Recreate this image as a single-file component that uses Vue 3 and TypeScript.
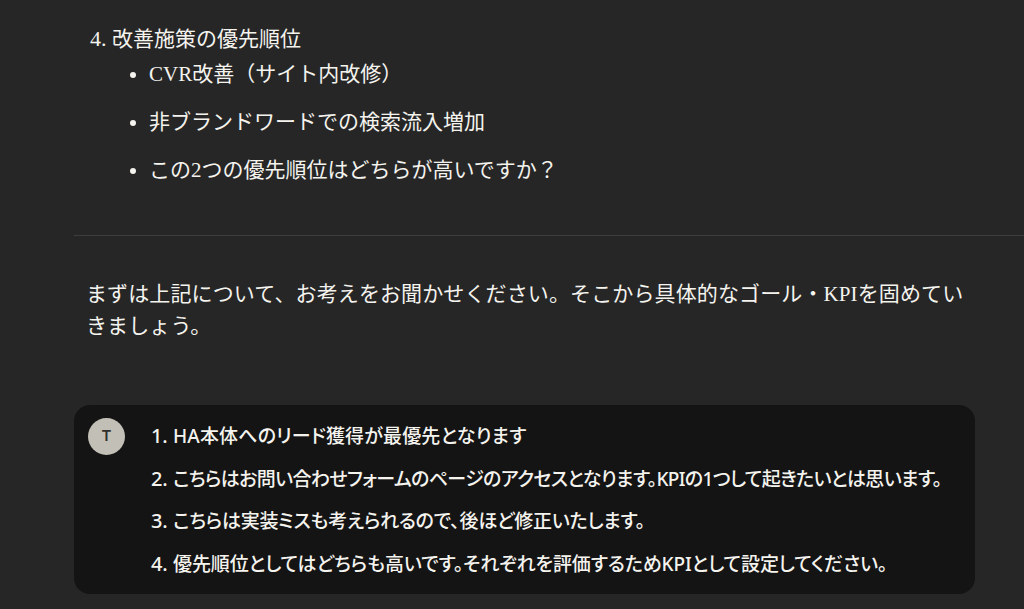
<script setup lang="ts">
interface Reply { text: string; tracking: number }

const bullets: string[] = [
  'CVR改善（サイト内改修）',
  '非ブランドワードでの検索流入増加',
  'この2つの優先順位はどちらが高いですか？',
]
const replies: Reply[] = [
  { text: 'HA本体へのリード獲得が最優先となります', tracking: 0.15 },
  { text: 'こちらはお問い合わせフォームのページのアクセスとなります。KPIの1つして起きたいとは思います。', tracking: -0.63 },
  { text: 'こちらは実装ミスも考えられるので、後ほど修正いたします。', tracking: -0.25 },
  { text: '優先順位としてはどちらも高いです。それぞれを評価するためKPIとして設定してください。', tracking: -0.1 },
]
</script>

<template>
  <main class="page">
    <section class="answer">
      <ol class="topics" start="4">
        <li>
          改善施策の優先順位
          <ul class="bullets">
            <li v-for="b in bullets" :key="b">{{ b }}</li>
          </ul>
        </li>
      </ol>
      <hr class="rule" />
      <p class="closing">まずは上記について、お考えをお聞かせください。そこから具体的なゴール・KPIを固めていきましょう。</p>
    </section>
    <section class="bubble">
      <div class="avatar">T</div>
      <ol class="replies">
        <li v-for="r in replies" :key="r.text" :style="{ letterSpacing: r.tracking + 'px' }">{{ r.text }}</li>
      </ol>
    </section>
  </main>
</template>

<style>
html, body { margin: 0; background: #262626; }
</style>

<style scoped>
.page {
  width: 1024px;
  height: 609px;
  overflow: hidden;
  box-sizing: border-box;
  padding: 24px 0 0 74px;
  background: #262626;
  color: #f4f3ee;
}
.answer {
  font-family: "Liberation Serif", "Noto Sans CJK JP", serif;
  font-size: 21px;
  line-height: 30px;
}
.topics {
  margin: 0;
  padding: 0 0 0 38px;
}
.topics > li::marker {
  font-size: 22px;
}
.bullets {
  margin: 5px 0 0;
  padding: 0 0 0 37px;
  list-style: disc;
}
.bullets li {
  margin-bottom: 18px;
}
.rule {
  border: 0;
  border-top: 1px solid #3d3d3b;
  margin: 50px 0 0;
}
.closing {
  margin: 42px 0 0;
  padding: 0 0 0 12px;
  width: 908px;
  box-sizing: border-box;
  line-height: 32px;
  letter-spacing: 0.12px;
}
.bubble {
  display: flex;
  gap: 25px;
  width: 901px;
  height: 189px;
  box-sizing: border-box;
  margin-top: 63px;
  padding: 13px 14px;
  border-radius: 16px;
  background: #141414;
  font-family: "Noto Sans", "Noto Sans CJK JP", sans-serif;
  font-size: 19px;
  font-weight: 500;
  font-feature-settings: "palt";
}
.avatar {
  flex: none;
  width: 37px;
  height: 37px;
  border-radius: 50%;
  background: #c2c0b6;
  color: #30302e;
  font-family: "Inter", sans-serif;
  font-size: 15px;
  font-weight: 600;
  line-height: 36px;
  text-align: center;
}
.replies {
  margin: -3px 0 0;
  padding: 0 0 0 23px;
  list-style: decimal;
  line-height: 42.5px;
  white-space: nowrap;
}
.replies > li::marker {
  font-size: 20px;
  letter-spacing: 0;
}
</style>
